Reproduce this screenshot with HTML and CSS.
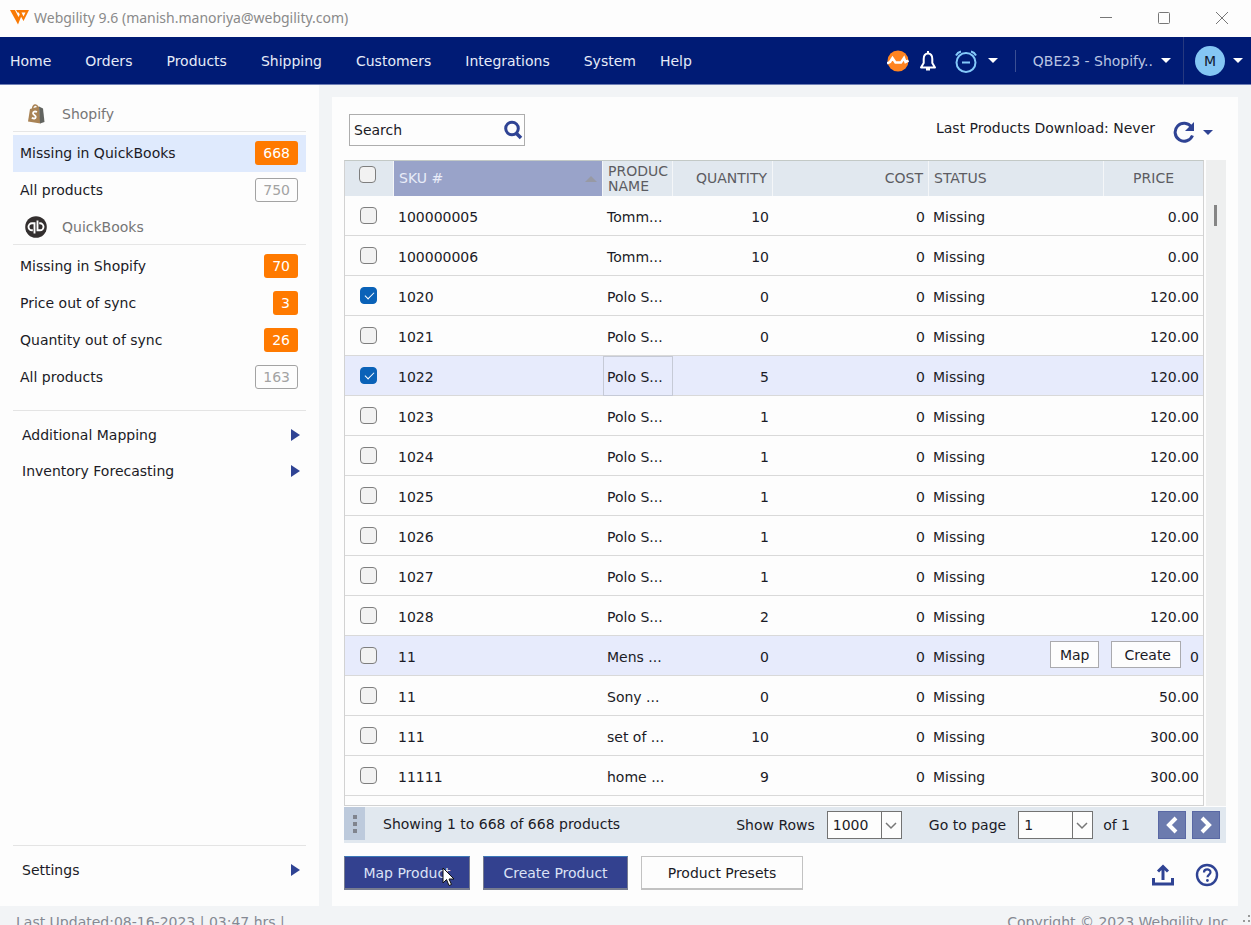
FILE: index.html
```html
<!DOCTYPE html>
<html lang="en">
<head>
<meta charset="utf-8">
<title>Webgility 9.6</title>
<link rel="stylesheet" href="styles.css">
</head>
<body>
<header class="titlebar">
  <svg class="brand" width="19" height="15" viewBox="0 0 19 15"><path d="M0 0h5l3.500 7 2-4 1.200 2.200L8 14.500z" fill="#f97a05"/><path d="M6 0h13l-5.500 11L8.700 2.600 7.500 2.600zM11.500 2.500l2 4 2-4z" fill="#f97a05" fill-rule="evenodd"/></svg>
  <span class="window-title">Webgility 9.6 (manish.manoriya@webgility.com)</span>
  <div class="window-controls">
    <button aria-label="Minimize"><svg width="14" height="14"><path d="M1 6.500h12" stroke="#777"/></svg></button>
    <button aria-label="Maximize"><svg width="14" height="14"><rect x="1.500" y="1.500" width="11" height="11" rx="1" fill="none" stroke="#777"/></svg></button>
    <button aria-label="Close"><svg width="14" height="14"><path d="M1 1l12 12M13 1L1 13" stroke="#777"/></svg></button>
  </div>
</header>
<nav class="navbar">
  <ul class="menu">
    <li><a href="#">Home</a></li><li><a href="#">Orders</a></li><li><a href="#">Products</a></li><li><a href="#">Shipping</a></li><li><a href="#">Customers</a></li><li><a href="#">Integrations</a></li><li><a href="#">System</a></li><li class="last"><a href="#">Help</a></li>
  </ul>
  <div class="tools">
    <button class="icon-btn" aria-label="Connection status"><svg width="22" height="22" viewBox="0 0 22 22"><circle cx="11" cy="11" r="10.500" fill="#ff8420"/><path d="M0 13.500l3-1.500 2.500-4 3 4.500h5.500l3-4.500 1.500 4 3-1.500" fill="none" stroke="#fff" stroke-width="2.500"/></svg></button>
    <button class="icon-btn bell" aria-label="Notifications"><svg width="18" height="20" viewBox="0 0 18 20"><path d="M9 2.500C5.800 2.500 4.700 5 4.700 8v4L2 16.500h14l-2.700-4.500V8c0-3-1.100-5.500-4.300-5.500z" fill="none" stroke="#fff" stroke-width="2" stroke-linejoin="round"/><path d="M8 0h2v3H8zM7 17h4v2.500H7z" fill="#fff"/></svg></button>
    <button class="icon-btn" aria-label="Scheduler"><svg width="24" height="24" viewBox="0 0 24 24"><g fill="none" stroke="#84c9fa" stroke-width="2"><circle cx="12" cy="13.500" r="9.500"/><path d="M8 13.500h8M2 6.500C3 4.500 5 3 7 2.500M22 6.500C21 4.500 19 3 17 2.500"/></g></svg></button>
    <span class="caret"></span>
    <span class="rule"></span>
    <button class="profile">QBE23 - Shopify..<span class="caret"></span></button>
    <button class="account"><span class="avatar">M</span><span class="caret"></span></button>
  </div>
</nav>
<div class="workspace">
  <aside class="sidebar">
    <h2 class="group first"><svg width="22" height="22" viewBox="0 0 22 22"><path d="M5 6l9-2.500 1.500 17L3 18.500z" fill="#a98355"/><path d="M14 3.500l4 2 1.500 13.500-4.500 1.500z" fill="#626460"/><path d="M7.500 6c.5-4.500 4-5.500 5.500-1.500" fill="none" stroke="#a98355" stroke-width="1.500"/><path d="M12 9c-2-1-4-.5-4 1.200s3 1.800 2.800 3.800-2.300 1.800-4 .7" fill="none" stroke="#fff" stroke-width="1.800"/></svg>Shopify</h2>
    <ul class="filters">
      <li class="active"><a href="#">Missing in QuickBooks<span class="badge">668</span></a></li>
      <li><a href="#">All products<span class="badge outline">750</span></a></li>
    </ul>
    <h2 class="group second"><svg width="22" height="22" viewBox="0 0 22 22"><circle cx="11" cy="11" r="10.800" fill="#332f2f"/><g fill="none" stroke="#fff" stroke-width="1.900"><path d="M9.500 17.500V7.300H7a3.500 3.500 0 0 0 0 7h.8M12.500 4.500v9.800H15a3.500 3.500 0 0 0 0-7h-.8"/></g></svg>QuickBooks</h2>
    <ul class="filters">
      <li><a href="#">Missing in Shopify<span class="badge">70</span></a></li>
      <li><a href="#">Price out of sync<span class="badge">3</span></a></li>
      <li><a href="#">Quantity out of sync<span class="badge">26</span></a></li>
      <li><a href="#">All products<span class="badge outline">163</span></a></li>
    </ul>
    <ul class="links">
      <li><a href="#">Additional Mapping<span class="arrow"></span></a></li>
      <li><a href="#">Inventory Forecasting<span class="arrow"></span></a></li>
    </ul>
    <ul class="links bottom">
      <li><a href="#">Settings<span class="arrow"></span></a></li>
    </ul>
  </aside>
  <main class="panel">
    <div class="toolbar">
      <form class="search">
        <input type="text" placeholder="Search" aria-label="Search">
        <button type="button" aria-label="Find"><svg width="20" height="20" viewBox="0 0 20 20"><circle cx="9" cy="8.500" r="6.300" fill="none" stroke="#2f4394" stroke-width="3"/><path d="M13 13l5 5" stroke="#2f4394" stroke-width="3.500"/></svg></button>
      </form>
      <div class="download">
        <span>Last Products Download: Never</span>
        <button aria-label="Refresh"><svg width="22" height="22" viewBox="0 0 22 22"><path d="M18.500 6A9 9 0 1 0 19.500 14.500" fill="none" stroke="#2f4394" stroke-width="3"/><path d="M21 1v9h-9z" fill="#2f4394"/></svg><span class="caret blue"></span></button>
      </div>
    </div>
    <div class="grid">
      <div class="table-wrap">
        <table>
          <colgroup><col class="c-check"><col><col class="c-name"><col class="c-qty"><col class="c-cost"><col class="c-status"><col class="c-price"></colgroup>
          <thead><tr><th class="check"><input type="checkbox" aria-label="Select all"></th><th class="sorted"><div class="sort">SKU #<span class="sort-arrow"></span></div></th><th>PRODUC NAME</th><th class="num">QUANTITY</th><th class="num">COST</th><th>STATUS</th><th class="price">PRICE</th></tr></thead>
          <tbody>
            <tr><td class="check"><input type="checkbox" aria-label="Select 100000005"></td><td>100000005</td><td>Tomm...</td><td class="num">10</td><td class="num">0</td><td>Missing</td><td class="num">0.00</td></tr>
            <tr><td class="check"><input type="checkbox" aria-label="Select 100000006"></td><td>100000006</td><td>Tomm...</td><td class="num">10</td><td class="num">0</td><td>Missing</td><td class="num">0.00</td></tr>
            <tr><td class="check"><input type="checkbox" checked aria-label="Select 1020"></td><td>1020</td><td>Polo S...</td><td class="num">0</td><td class="num">0</td><td>Missing</td><td class="num">120.00</td></tr>
            <tr><td class="check"><input type="checkbox" aria-label="Select 1021"></td><td>1021</td><td>Polo S...</td><td class="num">0</td><td class="num">0</td><td>Missing</td><td class="num">120.00</td></tr>
            <tr class="highlight"><td class="check"><input type="checkbox" checked aria-label="Select 1022"></td><td>1022</td><td class="focused">Polo S...</td><td class="num">5</td><td class="num">0</td><td>Missing</td><td class="num">120.00</td></tr>
            <tr><td class="check"><input type="checkbox" aria-label="Select 1023"></td><td>1023</td><td>Polo S...</td><td class="num">1</td><td class="num">0</td><td>Missing</td><td class="num">120.00</td></tr>
            <tr><td class="check"><input type="checkbox" aria-label="Select 1024"></td><td>1024</td><td>Polo S...</td><td class="num">1</td><td class="num">0</td><td>Missing</td><td class="num">120.00</td></tr>
            <tr><td class="check"><input type="checkbox" aria-label="Select 1025"></td><td>1025</td><td>Polo S...</td><td class="num">1</td><td class="num">0</td><td>Missing</td><td class="num">120.00</td></tr>
            <tr><td class="check"><input type="checkbox" aria-label="Select 1026"></td><td>1026</td><td>Polo S...</td><td class="num">1</td><td class="num">0</td><td>Missing</td><td class="num">120.00</td></tr>
            <tr><td class="check"><input type="checkbox" aria-label="Select 1027"></td><td>1027</td><td>Polo S...</td><td class="num">1</td><td class="num">0</td><td>Missing</td><td class="num">120.00</td></tr>
            <tr><td class="check"><input type="checkbox" aria-label="Select 1028"></td><td>1028</td><td>Polo S...</td><td class="num">2</td><td class="num">0</td><td>Missing</td><td class="num">120.00</td></tr>
            <tr class="highlight"><td class="check"><input type="checkbox" aria-label="Select 11"></td><td>11</td><td>Mens ...</td><td class="num">0</td><td class="num">0</td><td>Missing</td><td class="num with-actions">0<div class="row-actions"><button>Map</button><button>Create</button></div></td></tr>
            <tr><td class="check"><input type="checkbox" aria-label="Select 11"></td><td>11</td><td>Sony ...</td><td class="num">0</td><td class="num">0</td><td>Missing</td><td class="num">50.00</td></tr>
            <tr><td class="check"><input type="checkbox" aria-label="Select 111"></td><td>111</td><td>set of ...</td><td class="num">10</td><td class="num">0</td><td>Missing</td><td class="num">300.00</td></tr>
            <tr><td class="check"><input type="checkbox" aria-label="Select 11111"></td><td>11111</td><td>home ...</td><td class="num">9</td><td class="num">0</td><td>Missing</td><td class="num">300.00</td></tr>
          </tbody>
        </table>
      </div>
      <div class="scrollbar"><span class="thumb"></span></div>
    </div>
    <div class="pager">
      <button class="grip" aria-label="Grid options"><span></span><span></span><span></span></button>
      <span class="summary">Showing 1 to 668 of 668 products</span>
      <label for="rows">Show Rows</label>
      <div class="select"><select id="rows"><option>1000</option></select><svg width="12" height="8"><path d="M1 1l5 5 5-5" fill="none" stroke="#777" stroke-width="1.500"/></svg></div>
      <label class="goto" for="page">Go to page</label>
      <div class="select"><select id="page"><option>1</option></select><svg width="12" height="8"><path d="M1 1l5 5 5-5" fill="none" stroke="#777" stroke-width="1.500"/></svg></div>
      <span class="total">of 1</span>
      <button class="page-btn" aria-label="Previous page"><svg width="14" height="18"><path d="M11 2L4 9l7 7" fill="none" stroke="#fff" stroke-width="4"/></svg></button>
      <button class="page-btn" aria-label="Next page"><svg width="14" height="18"><path d="M3 2l7 7-7 7" fill="none" stroke="#fff" stroke-width="4"/></svg></button>
    </div>
    <div class="actions">
      <button class="btn primary map">Map Product<svg class="cursor" width="13" height="20" viewBox="0 0 13 20"><path d="M1 1v15l3.500-3.500L7 18.500l2.500-1L7 12h5z" fill="#fff" stroke="#111"/></svg></button>
      <button class="btn primary create">Create Product</button>
      <button class="btn presets">Product Presets</button>
      <button class="icon-btn upload" aria-label="Export"><svg width="24" height="24" viewBox="0 0 24 24"><path d="M2.500 15v6h19v-6M12 17V4M7 8.500l5-5 5 5" fill="none" stroke="#2f4394" stroke-width="3"/></svg></button>
      <button class="icon-btn help" aria-label="Help"><svg width="24" height="24" viewBox="0 0 24 24"><circle cx="12" cy="12" r="10" fill="none" stroke="#2f4394" stroke-width="2.400"/><path d="M9 9.500c0-4 6.500-4 6.500-.3 0 2.300-3 2.500-3 5" fill="none" stroke="#2f4394" stroke-width="2.200"/><circle cx="12.400" cy="17.500" r="1.400" fill="#2f4394"/></svg></button>
    </div>
  </main>
</div>
<footer class="statusbar">
  <span>Last Updated:08-16-2023 | 03:47 hrs |</span>
  <span class="copyright">Copyright © 2023 Webgility Inc.</span>
  <svg width="12" height="14"><path d="M9 3h2v2H9zM9 8h2v2H9zM4 8h2v2H4z" fill="#999"/></svg>
</footer>
</body>
</html>
```
FILE: styles.css
```css
* { box-sizing: border-box; }
body {
  margin: 0;
  height: 100vh;
  overflow: hidden;
  display: flex;
  flex-direction: column;
  background: #f2f4f6;
  color: #1b1b26;
  font: 14px/20px "DejaVu Sans", sans-serif;
}
button, input, select { font: inherit; color: inherit; }
button { padding: 0; border: 0; background: none; }
a { color: inherit; text-decoration: none; }
ul { list-style: none; margin: 0; padding: 0; }
svg { display: block; flex: none; }

.titlebar {
  flex: none;
  height: 37px;
  display: flex;
  align-items: center;
  padding: 0 22px 2px 10px;
  background: #fdfdfd;
  color: #8a8a8a;
}
.window-title { margin-left: 5px; font: 14px/20px "Noto Sans", sans-serif; }
.window-controls { margin-left: auto; display: flex; gap: 44px; }

.navbar {
  flex: none;
  height: 48px;
  display: flex;
  justify-content: space-between;
  background: #001b75;
  border-bottom: 1px solid #6f7fb5;
  color: #e6ebf8;
}
.menu { display: flex; align-items: center; gap: 34px; padding-left: 10px; white-space: nowrap; }
.menu .last { margin-left: -10px; }
.tools { display: flex; align-items: center; }
.icon-btn { display: flex; }
.bell { margin: 0 17px 0 10px; }
.caret {
  border: 5px solid transparent;
  border-top-color: #fff;
  border-bottom: 0;
}
.tools > .caret { margin-left: 10px; }
.rule { width: 1px; height: 22px; margin: 0 17px; background: #3b4f93; }
.profile { display: flex; align-items: center; gap: 8px; color: #b9c4e2; }
.account {
  display: flex;
  align-items: center;
  align-self: stretch;
  gap: 8px;
  margin-left: 12px;
  padding: 0 8px 0 11px;
  border-left: 1px solid #26397f;
}
.avatar {
  width: 30px;
  height: 30px;
  border-radius: 50%;
  background: #84c6f4;
  color: #101830;
  line-height: 30px;
}

.workspace { flex: 1; min-height: 0; display: flex; gap: 13px; padding-right: 13px; }
.sidebar {
  flex: none;
  width: 319px;
  display: flex;
  flex-direction: column;
  padding: 0 13px;
  background: #fdfdfd;
}
.group {
  display: flex;
  align-items: center;
  gap: 15px;
  height: 35px;
  margin: 0 0 3px;
  padding-left: 12px;
  border-bottom: 1px solid #e6e6e6;
  color: #767676;
  font-size: 14px;
  font-weight: normal;
}
.group.first { margin-top: 12px; }
.group.second { margin-top: 1px; }
.filters a { display: flex; align-items: center; justify-content: space-between; height: 37px; padding: 0 8px 1px 7px; }
.filters .active { background: #dfeafd; }
.badge {
  height: 24px;
  padding: 0 8px;
  border-radius: 3px;
  background: #ff7a00;
  color: #fff;
  line-height: 24px;
}
.badge.outline { padding: 0 7px; border: 1px solid #a3a3a3; background: none; color: #a3a3a3; line-height: 22px; }
.links { margin-top: 14px; padding: 6px 0; border-top: 1px solid #e4e4e4; }
.links.bottom { margin-top: auto; margin-bottom: 12px; }
.links a { display: flex; align-items: center; justify-content: space-between; height: 36px; padding: 0 6px 0 9px; }
.arrow { border: 6px solid transparent; border-left: 9px solid #2f4394; border-right: 0; }

.panel {
  flex: 1;
  min-width: 0;
  display: flex;
  flex-direction: column;
  margin-top: 12px;
  padding: 0 12px 16px;
  background: #fdfdfd;
}
.toolbar { flex: none; display: flex; justify-content: space-between; height: 63px; padding: 17px 13px 0 5px; }
.search { display: flex; align-items: center; width: 176px; height: 32px; padding-right: 1px; border: 1px solid #adadad; }
.search input { flex: 1; min-width: 0; padding: 0 4px; border: 0; outline: 0; background: none; }
.search input::placeholder { color: #1b1b26; opacity: 1; }
.download { display: flex; gap: 18px; line-height: 28px; }
.download button { display: flex; align-items: center; gap: 8px; height: 36px; }
.caret.blue { border-top-color: #2f4394; }

.grid { flex: 1; min-height: 0; display: flex; gap: 2px; }
.table-wrap { flex: 1; min-width: 0; overflow: hidden; border: 1px solid #d2d2d2; border-top-color: #c3c9c6; }
.scrollbar { width: 20px; background: #eeefef; }
.thumb { display: block; width: 3px; height: 21px; margin: 45px 0 0 8px; background: #858585; }
table { width: 100%; border-collapse: separate; border-spacing: 0; table-layout: fixed; }
.c-check { width: 49px; }
.c-name { width: 70px; }
.c-qty { width: 100px; }
.c-cost { width: 156px; }
.c-status { width: 175px; }
.c-price { width: 99px; }
th {
  height: 35px;
  padding: 0 5px;
  background: #e1e8ef;
  border-right: 1px solid #f4f6f8;
  color: #5c5c62;
  font-size: 14px;
  font-weight: normal;
  line-height: 15px;
  text-align: left;
}
th:last-child { border-right: 0; }
th.sorted { background: #99a3c9; color: #e8ecf8; }
.sort { display: flex; align-items: center; justify-content: space-between; }
.sort-arrow { border: 6px solid transparent; border-top: 0; border-bottom-color: #9799a4; }
th.price { padding-right: 29px; text-align: right; }
td { height: 40px; padding: 3px 4px 0; border-bottom: 1px solid #d9d9d9; white-space: nowrap; }
.num { text-align: right; }
td.check { padding: 0 0 0 15px; }
th.check { padding: 0 0 8px 14px; }
input[type="checkbox"] {
  appearance: none;
  display: block;
  width: 17px;
  height: 17px;
  margin: 0;
  border: 1px solid #7e7e7e;
  border-radius: 4px;
  background: #f2f2f2;
}
input[type="checkbox"]:checked {
  border-color: #0a62b8;
  background: #0a62b8;
}
input[type="checkbox"]:checked::before {
  content: "";
  display: block;
  width: 8px;
  height: 4px;
  margin: 4px 0 0 4px;
  border: 1px solid #fff;
  border-top: 0;
  border-right: 0;
  transform: rotate(-45deg);
}
.highlight td { background: #e7ebfc; }
.highlight .focused { outline: 1px solid #c6cad6; outline-offset: -1px; }
.with-actions { position: relative; }
.row-actions { position: absolute; top: 5px; right: 22px; display: flex; gap: 12px; }
.row-actions button { height: 27px; padding: 0 9px; border: 1px solid #aaaaae; background: #fdfdfd; }
.row-actions button + button { padding: 0 9px 0 12px; }

.pager { flex: none; display: flex; align-items: center; height: 36px; margin-top: 1px; padding-right: 6px; background: #e1e8ef; white-space: nowrap; }
.grip { display: grid; align-content: center; justify-content: center; gap: 3px; width: 21px; height: 33px; margin-bottom: 3px; background: #bdcadc; }
.grip span { width: 4px; height: 4px; background: #80848e; }
.summary { margin: 0 auto 2px 18px; }
.select { position: relative; width: 75px; height: 28px; margin-left: 12px; }
.select select { appearance: none; width: 100%; height: 100%; padding: 0 5px; border: 1px solid #737373; border-radius: 0; background: linear-gradient(#737373, #737373) right 19px top / 1px 100% no-repeat #fdfdfd; }
.select svg { position: absolute; right: 5px; top: 11px; }
.goto { margin-left: 27px; }
.total { margin: 0 28px 0 10px; }
.page-btn { display: grid; place-items: center; width: 28px; height: 28px; border: 1px solid #5968a4; background: #6c7bae; }
.page-btn + .page-btn { margin-left: 6px; }

.actions { flex: none; display: flex; align-items: center; gap: 13px; margin-top: 13px; }
.btn { height: 34px; border: 1px solid #c2c2c2; border-bottom-width: 2px; background: #fdfdfd; white-space: nowrap; }
.btn.primary { border-color: #777c90; background: #33418f; border-top-color: #3b78b8; color: #dbe2f6; }
.map { position: relative; width: 126px; }
.create { width: 145px; }
.presets { width: 162px; }
.cursor { position: absolute; left: 97px; top: 10px; }
.actions .icon-btn { padding-top: 3px; }
.upload { margin-left: auto; margin-right: 7px; }
.help { margin-right: 7px; }

.statusbar { flex: none; display: flex; height: 19px; padding: 6px 0 0 16px; overflow: hidden; color: #858993; }
.copyright { margin-left: auto; margin-right: 6px; }
```
